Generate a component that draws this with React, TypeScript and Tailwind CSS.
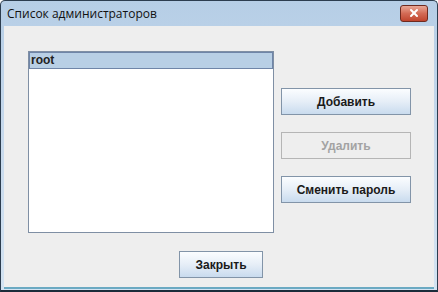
import { X } from 'lucide-react';

type BtnProps = {
  label: string;
  disabled?: boolean;
  className?: string;
};

function Btn({ label, disabled, className = '' }: BtnProps) {
  if (disabled) {
    return (
      <button
        disabled
        className={`h-[27px] border border-[#b5b5b5] bg-[#eeeeee] text-[12px] font-bold text-[#a3a3a3] ${className}`}
      >
        {label}
      </button>
    );
  }
  return (
    <button
      className={`h-[27px] border border-[#8294a8] bg-gradient-to-b from-[#fbfdff] via-[#e6eef7] to-[#c9dbee] text-[12px] font-bold text-[#1a1a1a] ${className}`}
    >
      {label}
    </button>
  );
}

export default function App() {
  const admins = ['root'];

  return (
    <div
      className="w-[438px] h-[292px] flex flex-col border border-[#2c3d4f] border-b-[2px] border-b-[#1b2c3a] bg-gradient-to-b from-[#b6cee6] via-[#c8daed] to-[#d3e3f2] rounded-t-[5px] overflow-hidden"
      style={{ fontFamily: '"Liberation Sans", Arial, sans-serif' }}
    >
      <div className="h-[25px] flex items-center justify-between pl-[6px] pr-[9px]">
        <span className="text-[12px] text-[#111]" style={{ fontFamily: '"Open Sans", "DejaVu Sans", sans-serif' }}>
          Список администраторов
        </span>
        <div className="w-[28px] h-[17px] mt-[-1px] rounded-[3px] border border-[#6e2a1f] bg-gradient-to-b from-[#e8a796] via-[#d36a55] to-[#c0442d] flex items-center justify-center">
          <X size={12} strokeWidth={4} className="text-white" />
        </div>
      </div>
      <div className="flex-1 mx-[3px] mb-[1px] bg-[#eeeeee] border-b-[2px] border-[#6aa9c2] flex flex-col">
        <div className="flex pl-[24px] pt-[25px]">
          <div className="w-[246px] h-[182px] border border-[#7f8fa4] bg-white">
            {admins.map(a => (
              <div
                key={a}
                className="h-[17px] bg-[#b8cfe5] border border-[#6f85a8] pl-[1px] text-[12px] font-bold leading-[15px] text-[#222]"
              >
                {a}
              </div>
            ))}
          </div>
          <div className="flex flex-col gap-[17px] ml-[7px] mt-[37px]">
            <Btn label="Добавить" className="w-[130px]" />
            <Btn label="Удалить" disabled className="w-[130px]" />
            <Btn label="Сменить пароль" className="w-[130px]" />
          </div>
        </div>
        <div className="flex pl-[175px] mt-[18px]">
          <Btn label="Закрыть" className="w-[84px]" />
        </div>
      </div>
    </div>
  );
}
